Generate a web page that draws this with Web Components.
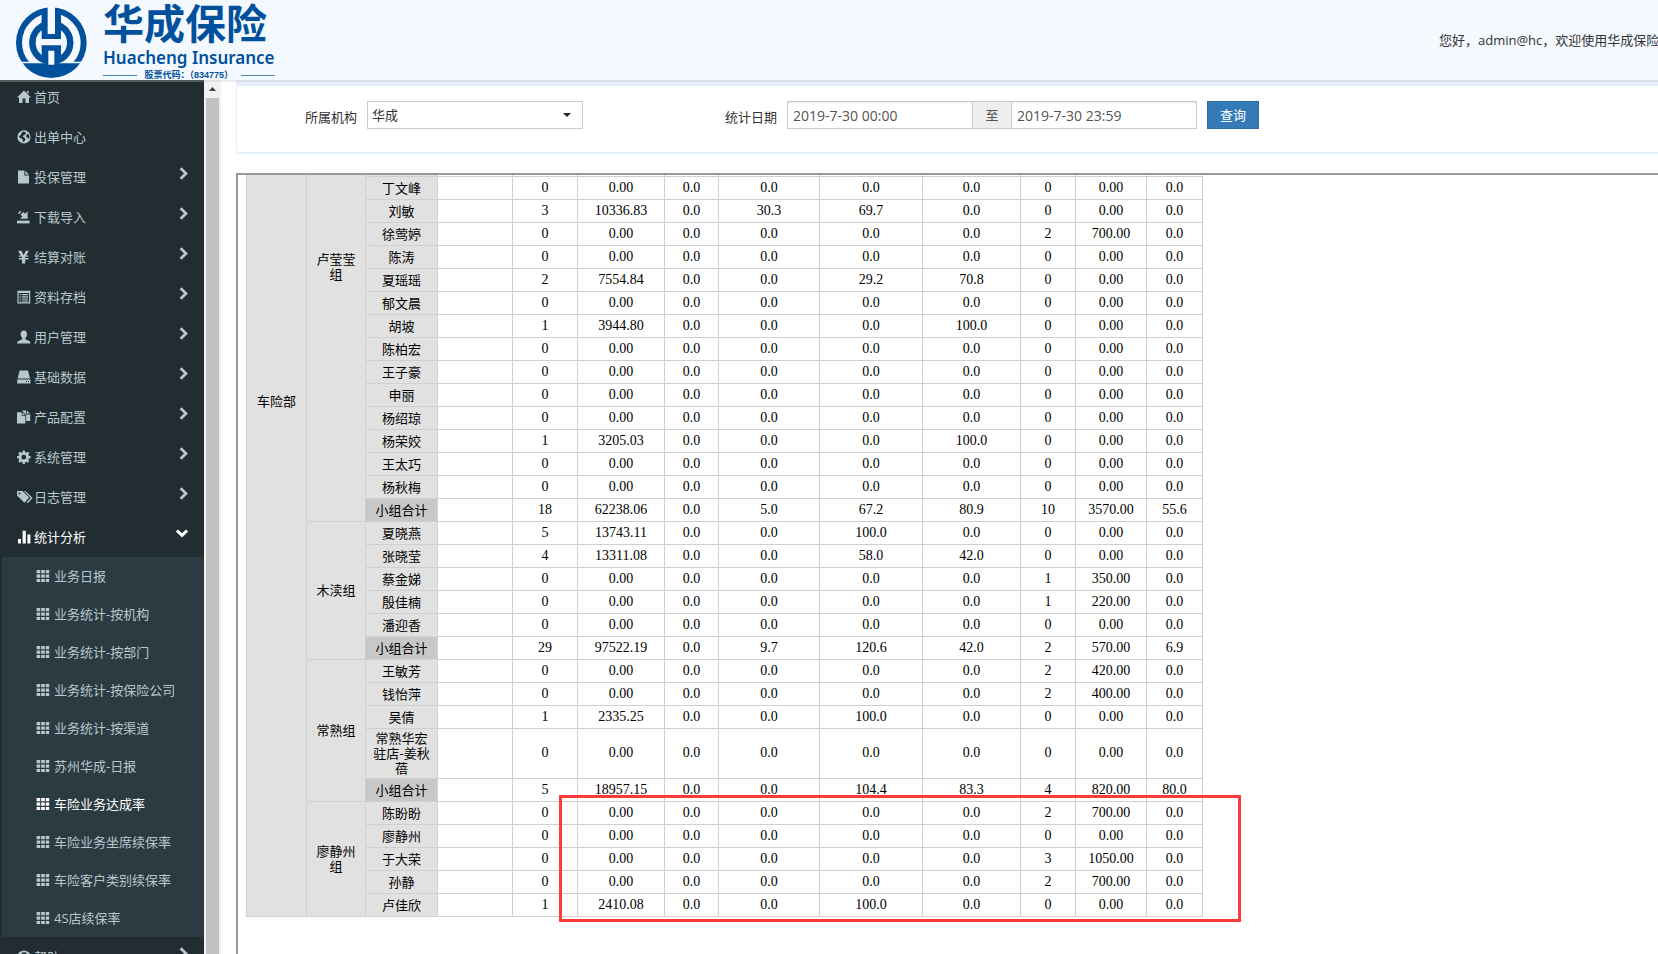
<!DOCTYPE html>
<html lang="zh-CN">
<head>
<meta charset="utf-8">
<title>华成保险</title>
<style>
  html, body { margin: 0; height: 100%; }
  body { overflow: hidden; background: #fff; color: #333; font: 13px/20px "Open Sans", "Noto Sans CJK SC", sans-serif; }
</style>
</head>
<body>
<app-shell>
  <app-header slot="header"></app-header>
  <app-sidebar slot="sidebar"></app-sidebar>
  <query-panel></query-panel>
  <report-frame></report-frame>
</app-shell>

<script>
const define = (name, html, setup) => {
  const template = document.createElement('template');
  template.innerHTML = html;
  customElements.define(name, class extends HTMLElement {
    connectedCallback() {
      if (this.shadowRoot) return;
      this.attachShadow({ mode: 'open' }).append(template.content.cloneNode(true));
      if (setup) setup(this, this.shadowRoot);
    }
  });
};

/* ---------- icons ---------- */
const ICONS = {
  home: '<path d="M7 .5 14 7.6h-2V13H8.4V8.6H5.6V13H2V7.6H0L7 .5Z"/><path d="M9.8 1h1.8v3L9.8 2.4Z"/>',
  globe: '<path fill-rule="evenodd" d="M7 .3a6.6 6.6 0 1 1 0 13.2A6.6 6.6 0 0 1 7 .3ZM6.6 1.6 4.8 2.5 4 4.8 2 6.2l.6 1.6 2 .6L6 10l-.4 2.2 1.8-.6L8.6 9 6.8 7.2 5.6 6.6 7 5l1.6-.8.2-1.6ZM10 4.2 9 6l.8 1.4 1.4.4.6 1.6.8-2.6-.8-2.6Z"/>',
  file: '<path d="M1 .6h6.4V5.4H12V13.4H1Z"/><path d="M8.4.8 12 4.4H8.4Z"/>',
  save: '<path d="M0 10.6h12.6v2.8H0Z"/><path d="M10.6 1.2v7.6H3L5.4 6.6 3.6 4.8 6.4 2 8.2 3.8Z"/><path d="M1 3.2 3.4.8l1 1L2 4.2Z"/>',
  yen: '<path d="M1 .8h3.4L6.6 5 8.8.8h3.1L9.2 5.4h2.2v1.4H8.2v1.2h3.2v1.4H8.2v4H5v-4H1.8V8H5V6.8H1.8V5.4h2Z"/>',
  list: '<path fill-rule="evenodd" d="M.4.8h12.8v12.6H.4ZM1.6 3v9.2H12V3Z"/><path d="M2.6 4h1.2v1.2H2.6Zm2.2 0H11v1.2H4.8ZM2.6 6.2h1.2v1.2H2.6Zm2.2 0H11v1.2H4.8ZM2.6 8.4h1.2v1.2H2.6Zm2.2 0H11v1.2H4.8ZM2.6 10.4h1.2v1.2H2.6Zm2.2 0H11v1.2H4.8Z"/>',
  user: '<path d="M6.8.4c2 0 3.2 1.5 3.2 3.6 0 1.7-.6 3-1.6 3.9v1.3l3.8 1.7c.8.4 1.2 1 1.2 2.5H.2c0-1.500.4-2.100 1.200-2.500l3.800-1.700V7.900C4.200 7 3.600 5.700 3.600 4 3.600 1.900 4.800.4 6.800.4Z"/>',
  hdd: '<path d="M2.600.6h8.400l2 8H.6Z"/><path fill-rule="evenodd" d="M.2 9.600h13.200v3.800H.2ZM9 11v1h1v-1Zm2 0v1h1v-1Z"/>',
  copy: '<path d="M0 2.200h4.800v3.600h3.600v7.600H0Z"/><path d="M5.600 2.400 8.200 5H5.600Z"/><path d="M5.600.6h3.600v3.800h4v6.600H9.200V4.800L5.600 1.400Z"/><path d="M10 .8 13 3.600h-3Z"/>',
  cog: '<path fill-rule="evenodd" d="M5.800.4h2l.4 1.800 1.200.5 1.500-1 1.400 1.400-1 1.500.5 1.200 1.800.4v2l-1.800.4-.5 1.200 1 1.500-1.400 1.400-1.500-1-1.200.5-.4 1.800h-2l-.4-1.800-1.200-.5-1.500 1-1.400-1.400 1-1.500-.5-1.200L0 8.200v-2l1.800-.4.5-1.200-1-1.500 1.400-1.400 1.500 1 1.200-.5ZM6.800 4.800a2.400 2.400 0 1 0 0 4.800 2.400 2.400 0 0 0 0-4.800Z"/>',
  tags: '<path fill-rule="evenodd" d="M0 1h5.600l6.600 6.600-4.800 5.200L0 5.600ZM2.400 2.400a1 1 0 1 0 0 2 1 1 0 0 0 0-2Z"/><path d="M7 1h1.400L15.600 8l-5 5.200-1-.9L13.700 8Z"/>',
  stats: '<path d="M1 9h3v4.400H1ZM5.600.8h3.200v12.600H5.600ZM10.400 4.600h3v8.800h-3Z"/>',
  question: '<path fill-rule="evenodd" d="M7 .4a6.600 6.600 0 1 1 0 13.200A6.600 6.600 0 0 1 7 .4ZM4.200 5h2c0-1.600 1.800-1.400 1.600-.2C7.600 5.800 6 6 6 8.200h2c0-1.400 2-1.600 2-3.600 0-3-5.800-3.200-5.800.4ZM6 9.200v2h2v-2Z"/>',
  grid: '<path d="M.6 1h3.600v3.200H.6Zm4.600 0h3.600v3.200H5.200Zm4.600 0h3.400v3.200H9.800ZM.6 5.400h3.600v3.400H.6Zm4.600 0h3.600v3.400H5.200Zm4.600 0h3.400v3.400H9.800ZM.6 10h3.600v3H.6Zm4.600 0h3.600v3H5.200Zm4.600 0h3.400v3H9.800Z"/>',
  right: '<path d="M2.600 2.200 4.600.2 11 6.400l-6.400 6.400-2-2L7 6.400Z"/>',
  down: '<path d="M-1.200 4.600 1 2.400 5 6.200 9 2.400 11.200 4.600 5 10.600Z"/>'
};
define('ui-icon', `<style>
  :host { display: block; width: 14px; height: 14px; flex: none; }
  svg { display: block; overflow: visible; fill: currentColor; }
</style><svg width="14" height="14" viewBox="0 0 14 14" aria-hidden="true"></svg>`, (host, root) => {
  root.querySelector('svg').innerHTML = ICONS[host.getAttribute('name')];
});

/* ---------- shell ---------- */
define('app-shell', `<style>
  :host { display: grid; grid-template: 80px minmax(0, 1fr) / 221px minmax(0, 1fr); height: 100vh; overflow: hidden; }
  ::slotted([slot=header]) { grid-column: 1 / -1; }
  main { display: flex; flex-direction: column; padding-left: 15px; min-height: 0; overflow: hidden; }
</style>
<slot name="header"></slot><slot name="sidebar"></slot><main><slot></slot></main>`);

/* ---------- header ---------- */
define('brand-logo', `<style>
  :host { display: flex; gap: 16px; color: #00509b; padding-left: 16px; font-weight: 700; white-space: nowrap; }
  svg { display: block; margin-top: 7px; flex: none; }
  .words { display: flex; flex-direction: column; }
  .cn { font: 700 41px/42px "Noto Sans CJK SC", sans-serif; }
  .en { margin-top: 3px; font: 600 17px/25px "Noto Sans", sans-serif; }
  .code { display: flex; align-items: center; justify-content: space-between; font: 700 9px/10px "Liberation Sans", "Noto Sans CJK SC", sans-serif; }
  .code::before, .code::after { content: ""; width: 34px; height: 1px; background: #4a86bd; }
</style>
<svg width="71" height="71" viewBox="0 0 213 213" role="img" aria-label="华成保险">
  <defs><clipPath id="top"><rect width="213" height="165"/></clipPath></defs>
  <circle cx="106" cy="107" r="106" fill="#00509b"/>
  <circle cx="106" cy="107" r="77" fill="none" stroke="#f4f9ff" stroke-width="22" clip-path="url(#top)"/>
  <path fill="#f4f9ff" d="M0 164h213v5H0Z"/>
  <circle cx="106" cy="107" r="66" fill="#00509b"/>
  <path fill="#00509b" d="M77 8h58v60H77Z"/>
  <circle cx="106" cy="107" r="47" fill="#f4f9ff"/>
  <path fill="#00509b" d="M77 40h58v56H77ZM77 115h58v50H77Z"/>
  <path fill="#f4f9ff" d="M95 0h22v81H95ZM97 131h18v42H97Z"/>
</svg>
<div class="words"><span class="cn">华成保险</span><span class="en">Huacheng Insurance</span><span class="code">股票代码：（834775）</span></div>`);

define('app-header', `<style>
  :host { display: flex; justify-content: space-between; background: #f4f9ff; box-shadow: 0 2px 0 rgba(190,190,190,.3); position: relative; z-index: 2; }
  p { margin: 0; flex: 0 0 219px; overflow: hidden; white-space: nowrap; line-height: 80px; }
</style>
<brand-logo></brand-logo><p>您好，admin@hc，欢迎使用华成保险</p>`);

/* ---------- sidebar ---------- */
define('nav-item', `<style>
  :host { display: block; color: #b8c7ce; }
  :host([active]) { color: #fff; }
  a { display: flex; align-items: center; height: 40px; padding: 0 13px 0 17px; color: inherit; text-decoration: none; white-space: nowrap; }
  :host([sub]) a { height: 38px; padding-left: 34px; }
  span { flex: 1; margin-left: 3px; }
  :host([sub]) span { margin-left: 4px; }
  .arrow { margin-bottom: 6px; }
</style><a href="#"><ui-icon></ui-icon><span></span></a>`, (host, root) => {
  root.querySelector('ui-icon').replaceWith(Object.assign(document.createElement('template'), { innerHTML: `<ui-icon name="${host.getAttribute('icon')}"></ui-icon>` }).content);
  root.querySelector('span').textContent = host.getAttribute('label');
  const arrow = host.getAttribute('arrow');
  if (arrow) root.querySelector('a').insertAdjacentHTML('beforeend', `<ui-icon class="arrow" name="${arrow}"></ui-icon>`);
});

const MENU = [['home','首页'],['globe','出单中心'],['file','投保管理',1],['save','下载导入',1],['yen','结算对账',1],['list','资料存档',1],['user','用户管理',1],['hdd','基础数据',1],['copy','产品配置',1],['cog','系统管理',1],['tags','日志管理',1]];
const REPORTS = ['业务日报','业务统计-按机构','业务统计-按部门','业务统计-按保险公司','业务统计-按渠道','苏州华成-日报','车险业务达成率','车险业务坐席续保率','车险客户类别续保率','4S店续保率'];
define('app-sidebar', `<style>
  :host { display: flex; overflow: hidden; min-height: 0; }
  nav { flex: 1; background: #222d32; }
  .list { margin-top: -3px; }
  .sub { margin-left: 2px; background: #2c3b41; }
  .bar { width: 13px; padding: 0 2px; background: #f1f1f1; display: flex; flex-direction: column; }
  .bar svg { height: 18px; }
  .thumb { flex: 1; background: #c1c1c1; }
</style>
<nav><div class="list"></div></nav>
<div class="bar" aria-hidden="true"><svg width="13" height="18" viewBox="0 0 13 18"><path d="M3 11h7L6.500 7Z" fill="#404040"/></svg><div class="thumb"></div></div>`, (host, root) => {
  root.querySelector('.list').innerHTML =
    MENU.map(([i, t, a]) => `<nav-item icon="${i}" label="${t}" ${a ? 'arrow="right"' : ''}></nav-item>`).join('') +
    '<nav-item icon="stats" label="统计分析" arrow="down" active></nav-item><div class="sub">' +
    REPORTS.map(t => `<nav-item sub icon="grid" label="${t}" ${t === '车险业务达成率' ? 'active' : ''}></nav-item>`).join('') +
    '</div><nav-item icon="question" label="帮助" arrow="right"></nav-item>';
});

/* ---------- query form ---------- */
define('query-panel', `<style>
  :host { display: block; flex: none; border: solid #e6f0fc; border-width: 6px 0 2px 1px; border-radius: 0 0 0 4px; padding: 15px 0 19px 68px; }
  form { display: flex; align-items: flex-start; white-space: nowrap; }
  label { line-height: 32px; margin-right: 10px; }
  select, input, button { box-sizing: border-box; height: 28px; margin: 0; border: 1px solid #ccc; border-radius: 0; font: inherit; font-size: 13px; }
  .pick { display: grid; width: 216px; margin-right: 142px; }
  .pick > * { grid-area: 1 / 1; }
  select { appearance: none; padding: 0 4px; background: #fff; color: #333; }
  .pick svg { justify-self: end; align-self: center; margin-right: 12px; pointer-events: none; }
  .range { display: flex; margin-right: 10px; }
  input { width: 186px; padding: 0 5px; color: #555; font-size: 14px; box-shadow: inset 0 1px 1px rgba(0,0,0,.08); }
  .to { box-sizing: border-box; width: 38px; text-align: center; line-height: 26px; background: #eee; color: #555; border: solid #ccc; border-width: 1px 0; }
  button { width: 52px; padding: 0; background: #337ab7; border-color: #2e6da4; color: #fff; }
</style>
<form onsubmit="return false">
  <label for="org">所属机构</label>
  <div class="pick"><select id="org"><option>华成</option></select><svg width="8" height="4" viewBox="0 0 8 4"><path d="M0 0h8L4 4Z" fill="#222"/></svg></div>
  <label for="from">统计日期</label>
  <div class="range"><input id="from" type="text" value="2019-7-30 00:00"><span class="to">至</span><input type="text" aria-label="结束日期" value="2019-7-30 23:59"></div>
  <button type="submit">查询</button>
</form>`);

/* ---------- report ---------- */
const Z = '|0|0.00|0.0|0.0|0.0|0.0|0|0.00|0.0';
const GROUPS = [
  ['卢莹莹组', ['丁文峰' + Z, '刘敏|3|10336.83|0.0|30.3|69.7|0.0|0|0.00|0.0', '徐莺婷|0|0.00|0.0|0.0|0.0|0.0|2|700.00|0.0', '陈涛' + Z,
    '夏瑶瑶|2|7554.84|0.0|0.0|29.2|70.8|0|0.00|0.0', '郁文晨' + Z, '胡坡|1|3944.80|0.0|0.0|0.0|100.0|0|0.00|0.0', '陈柏宏' + Z, '王子豪' + Z,
    '申丽' + Z, '杨绍琼' + Z, '杨荣姣|1|3205.03|0.0|0.0|0.0|100.0|0|0.00|0.0', '王太巧' + Z, '杨秋梅' + Z,
    '小组合计|18|62238.06|0.0|5.0|67.2|80.9|10|3570.00|55.6']],
  ['木渎组', ['夏晓燕|5|13743.11|0.0|0.0|100.0|0.0|0|0.00|0.0', '张晓莹|4|13311.08|0.0|0.0|58.0|42.0|0|0.00|0.0',
    '蔡金娣|0|0.00|0.0|0.0|0.0|0.0|1|350.00|0.0', '殷佳楠|0|0.00|0.0|0.0|0.0|0.0|1|220.00|0.0', '潘迎香' + Z,
    '小组合计|29|97522.19|0.0|9.7|120.6|42.0|2|570.00|6.9']],
  ['常熟组', ['王敏芳|0|0.00|0.0|0.0|0.0|0.0|2|420.00|0.0', '钱怡萍|0|0.00|0.0|0.0|0.0|0.0|2|400.00|0.0', '吴倩|1|2335.25|0.0|0.0|100.0|0.0|0|0.00|0.0',
    '常熟华宏驻店-姜秋蓓' + Z, '小组合计|5|18957.15|0.0|0.0|104.4|83.3|4|820.00|80.0']],
  ['廖静州组', ['陈盼盼|0|0.00|0.0|0.0|0.0|0.0|2|700.00|0.0', '廖静州' + Z, '于大荣|0|0.00|0.0|0.0|0.0|0.0|3|1050.00|0.0',
    '孙静|0|0.00|0.0|0.0|0.0|0.0|2|700.00|0.0', '卢佳欣|1|2410.08|0.0|0.0|100.0|0.0|0|0.00|0.0']]
];
define('report-table', `<style>
  :host { display: block; color: #000; font: 13px/15px "Noto Sans CJK SC", sans-serif; }
  table { table-layout: fixed; width: 957px; border-collapse: separate; border-spacing: 0; border-left: 1px solid #d0d0d0; }
  th, td { box-sizing: border-box; height: 23px; padding: 1px 4px 3px; border: solid #d0d0d0; border-width: 0 1px 1px 0; text-align: center; font-weight: 400; }
  td { font-family: "Liberation Serif", serif; font-size: 14px; }
  th { background: #e1e1e1; }
  th.sum { background: #c8c8c8; }
  tr.tail > * { height: 2px; padding: 0; }
  tr.tail > th.dept { vertical-align: top; padding-top: 218px; }
  tr.tail > th.group { vertical-align: top; padding: 76px 4px 0; }
</style>
<table><colgroup></colgroup><tbody></tbody></table>`, (host, root) => {
  root.querySelector('colgroup').innerHTML = [60,59,72,75,65,87,54,101,103,98,55,71,56].map(w => `<col style="width:${w}px">`).join('');
  const total = GROUPS.reduce((n, g) => n + g[1].length, 1);
  let html = `<tr class="tail"><th class="dept" rowspan="${total}">车险部</th><th class="group" rowspan="${GROUPS[0][1].length + 1}">${GROUPS[0][0]}</th><th></th>${'<td></td>'.repeat(10)}</tr>`;
  GROUPS.forEach(([name, rows], g) => rows.forEach((row, r) => {
    const [who, ...values] = row.split('|');
    html += '<tr>' + (g && !r ? `<th rowspan="${rows.length}">${name}</th>` : '') +
      `<th${who === '小组合计' ? ' class="sum"' : ''}>${who}</th><td></td>` + values.map(v => `<td>${v}</td>`).join('') + '</tr>';
  }));
  root.querySelector('tbody').innerHTML = html;
});

define('report-frame', `<style>
  :host { display: block; position: relative; flex: 1; min-height: 0; overflow: hidden; margin-top: 19px; border: solid #999; border-width: 2px 0 0 2px; padding-left: 8px; }
  .mark { position: absolute; left: 321px; top: 620px; width: 682px; height: 127px; box-sizing: border-box; border: 3px solid #ff3838; pointer-events: none; }
</style>
<report-table></report-table><div class="mark"></div>`);
</script>
</body>
</html>
